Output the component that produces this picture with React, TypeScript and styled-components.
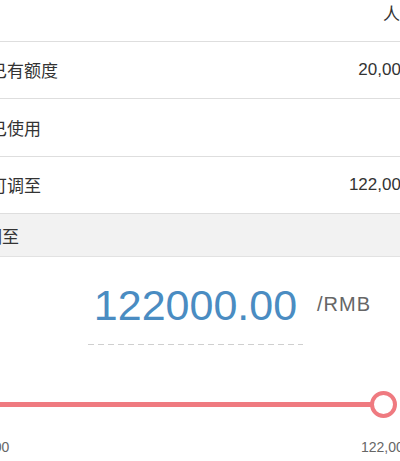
import React from 'react';
import styled, { createGlobalStyle } from 'styled-components';

const GlobalStyle = createGlobalStyle`
  html, body {
    margin: 0;
    padding: 0;
    background: #fff;
    overflow: hidden;
  }
  body {
    font-family: "Liberation Sans", "Noto Sans CJK SC", sans-serif;
    color: #333;
  }
`;

// the screenshot is a crop of a wider page, so the page sticks out on both sides
const Page = styled.div`
  width: 470px;
  margin: -16px 0 0 -25px;
  background: #fff;
`;

const Row = styled.div`
  box-sizing: border-box;
  height: 57.5px;
  padding: 0 11px 0 15px;
  display: flex;
  align-items: center;
  justify-content: space-between;
  border-bottom: 1px solid #dedede;
`;

const Label = styled.span`
  font-size: 17px;
  color: #333;
`;

const Value = styled.span`
  font-size: 17px;
  color: #333;
`;

const SectionHeader = styled.div`
  box-sizing: border-box;
  height: 43px;
  padding: 0 10px;
  display: flex;
  align-items: center;
  background: #f2f2f2;
  border-bottom: 1px solid #e2e2e2;
  font-size: 17px;
  color: #333;
`;

const AmountRow = styled.div`
  display: flex;
  align-items: flex-start;
  padding: 27px 0 0 113px;
  gap: 14px;
`;

const AmountBox = styled.div`
  width: 215px;
  padding-bottom: 18px;
  text-align: center;
  background-image: linear-gradient(to right, #cfcfcf 60%, transparent 60%);
  background-size: 10px 1px;
  background-repeat: repeat-x;
  background-position: left bottom;
`;

const Amount = styled.div`
  font-size: 43px;
  line-height: 1;
  color: #4a8cc2;
`;

const Unit = styled.span`
  margin-top: 9.5px;
  font-size: 20px;
  line-height: 1;
  letter-spacing: 1px;
  color: #666;
`;

const SliderWrap = styled.div`
  padding: 45.5px 62px 0 15px;
`;

const Track = styled.div`
  position: relative;
  height: 27px;
  display: flex;
  align-items: center;
`;

const Fill = styled.div`
  height: 5px;
  border-radius: 3px;
  background: #ef7a80;
`;

const Handle = styled.div`
  position: absolute;
  top: 0;
  box-sizing: border-box;
  width: 27px;
  height: 27px;
  margin-left: -13.5px;
  border-radius: 50%;
  border: 4px solid #ef7a80;
  background: #fff;
`;

const Limits = styled.div`
  display: flex;
  justify-content: space-between;
  padding: 19.5px 14px 0 7px;
  font-size: 14px;
  line-height: 20px;
  color: #666;
`;

const rows = [
  { label: '', value: '人民币' },
  { label: '已有额度', value: '20,000.00' },
  { label: '已使用', value: '0.00' },
  { label: '可调至', value: '122,000.00' },
];

export default function App() {
  const pct = 100;
  return (
    <>
      <GlobalStyle />
      <Page>
        {rows.map((r, i) => (
          <Row key={i}>
            <Label>{r.label}</Label>
            <Value>{r.value}</Value>
          </Row>
        ))}
        <SectionHeader>调至</SectionHeader>
        <AmountRow>
          <AmountBox>
            <Amount>122000.00</Amount>
          </AmountBox>
          <Unit>/RMB</Unit>
        </AmountRow>
        <SliderWrap>
          <Track>
            <Fill style={{ width: `${pct}%` }} />
            <Handle style={{ left: `${pct}%` }} />
          </Track>
        </SliderWrap>
        <Limits>
          <span>0.00</span>
          <span>122,000.00</span>
        </Limits>
      </Page>
    </>
  );
}
